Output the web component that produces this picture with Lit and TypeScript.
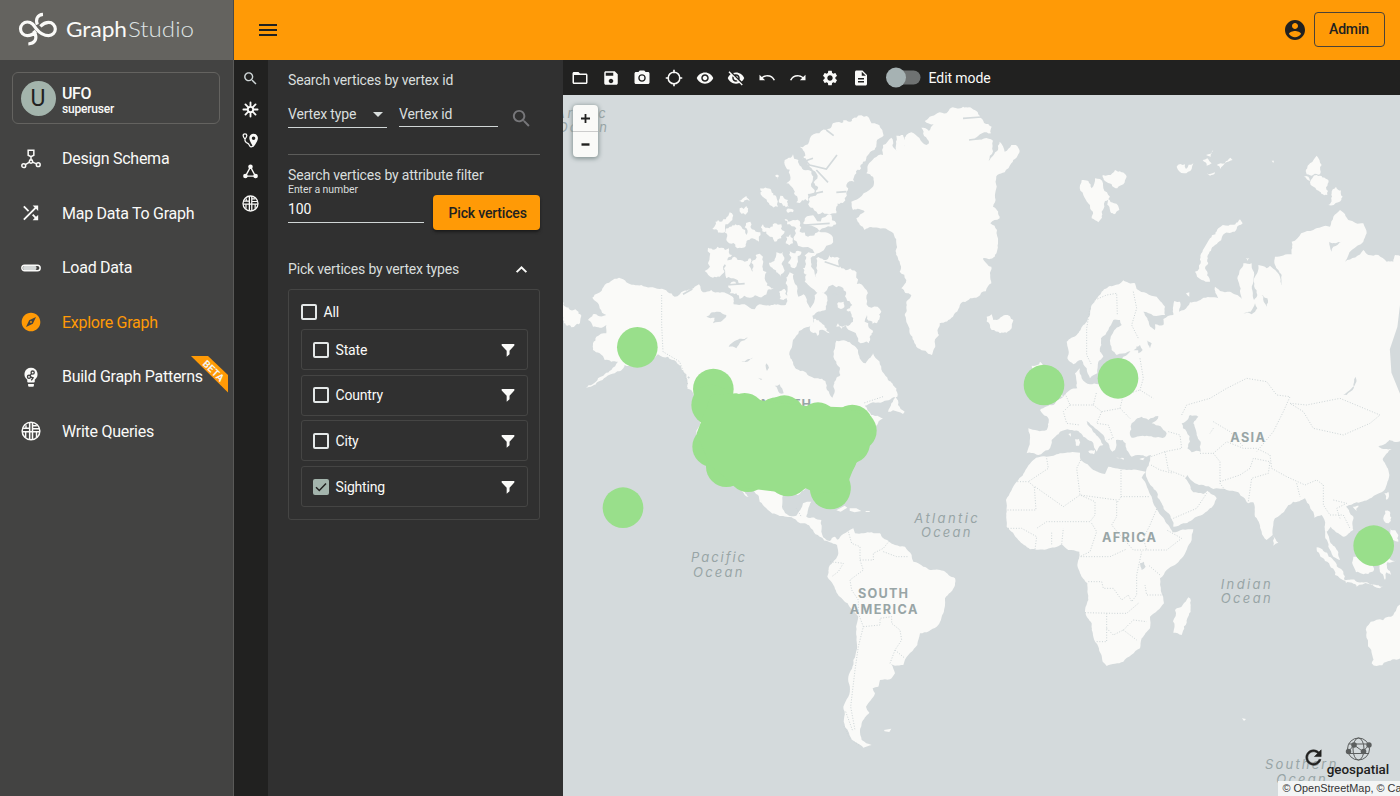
import { LitElement, html, css, svg } from "lit";
import { customElement, state } from "lit/decorators.js";

/* ---------- icons (24-unit grid) ---------- */
const icons: Record<string, unknown> = {
  menu: svg`<path d="M3 18h18v-2H3v2zm0-5h18v-2H3v2zm0-7v2h18V6H3z"/>`,
  account: svg`<path d="M12 2C6.480 2 2 6.480 2 12s4.480 10 10 10 10-4.480 10-10S17.520 2 12 2zm0 3c1.660 0 3 1.340 3 3s-1.340 3-3 3-3-1.340-3-3 1.340-3 3-3zm0 14.200c-2.500 0-4.710-1.280-6-3.220.03-1.990 4-3.080 6-3.080 1.990 0 5.970 1.090 6 3.080-1.290 1.940-3.500 3.220-6 3.220z"/>`,
  search: svg`<path d="M15.500 14h-.79l-.28-.27C15.410 12.590 16 11.110 16 9.500 16 5.910 13.090 3 9.500 3S3 5.910 3 9.500 5.910 16 9.500 16c1.610 0 3.090-.59 4.230-1.570l.27.28v.79l5 4.990L20.490 19l-4.990-5zm-6 0C7.010 14 5 11.990 5 9.500S7.010 5 9.500 5 14 7.010 14 9.500 11.990 14 9.500 14z"/>`,
  folder: svg`<path d="M20 6h-8l-2-2H4c-1.100 0-1.990.9-1.990 2L2 18c0 1.100.9 2 2 2h16c1.100 0 2-.9 2-2V8c0-1.100-.9-2-2-2zm0 12H4V8h16v10z"/>`,
  save: svg`<path d="M17 3H5c-1.110 0-2 .9-2 2v14c0 1.100.89 2 2 2h14c1.100 0 2-.9 2-2V7l-4-4zm-5 16c-1.660 0-3-1.340-3-3s1.340-3 3-3 3 1.340 3 3-1.340 3-3 3zm3-10H5V5h10v4z"/>`,
  camera: svg`<circle cx="12" cy="12" r="3.200"/><path d="M9 2L7.170 4H4c-1.100 0-2 .9-2 2v12c0 1.100.9 2 2 2h16c1.100 0 2-.9 2-2V6c0-1.100-.9-2-2-2h-3.170L15 2H9zm3 15c-2.760 0-5-2.240-5-5s2.240-5 5-5 5 2.240 5 5-2.240 5-5 5z"/>`,
  target: svg`<circle cx="12" cy="12" r="7.800" fill="none" stroke="currentColor" stroke-width="2"/><path d="M10.900 1h2.200v4.500h-2.200zM10.900 18.500h2.200V23h-2.200zM1 10.900h4.500v2.200H1zM18.500 10.900H23v2.200h-4.500z"/>`,
  eye: svg`<path d="M12 4.500C7 4.500 2.730 7.610 1 12c1.730 4.390 6 7.500 11 7.500s9.270-3.110 11-7.500c-1.730-4.390-6-7.500-11-7.500zM12 17c-2.760 0-5-2.240-5-5s2.240-5 5-5 5 2.240 5 5-2.240 5-5 5zm0-8c-1.660 0-3 1.340-3 3s1.340 3 3 3 3-1.340 3-3-1.340-3-3-3z"/>`,
  eyeOff: svg`<path d="M12 7c2.760 0 5 2.240 5 5 0 .65-.13 1.260-.36 1.830l2.920 2.920c1.510-1.260 2.700-2.890 3.430-4.750-1.730-4.390-6-7.500-11-7.500-1.400 0-2.740.25-3.980.7l2.160 2.160C10.740 7.130 11.350 7 12 7zM2 4.270l2.280 2.280.46.46C3.080 8.300 1.780 10.020 1 12c1.730 4.390 6 7.500 11 7.500 1.550 0 3.030-.3 4.380-.84l.42.42L19.730 22 21 20.730 3.270 3 2 4.270zM7.530 9.800l1.550 1.550c-.05.21-.08.43-.08.65 0 1.660 1.340 3 3 3 .22 0 .44-.03.65-.08l1.550 1.550c-.67.33-1.410.53-2.200.53-2.760 0-5-2.240-5-5 0-.79.2-1.530.53-2.200zm4.310-.78l3.150 3.150.02-.16c0-1.660-1.340-3-3-3l-.17.010z"/>`,
  undo: svg`<path d="M2 7.500v7.500h7.500l-3-3c1.700-1.300 3.700-2 6-2 3.700 0 6.900 2 8.300 5.300l1.900-.8C21 10.600 17.100 8 12.500 8c-2.800 0-5.400 1-7.400 2.600z"/>`,
  redo: svg`<path d="M22 7.500v7.500h-7.500l3-3c-1.700-1.300-3.700-2-6-2-3.700 0-6.900 2-8.300 5.300l-1.900-.8C3 10.600 6.900 8 11.500 8c2.800 0 5.400 1 7.400 2.600z"/>`,
  settings: svg`<path d="M19.140 12.940c.04-.3.06-.61.06-.94 0-.32-.02-.64-.07-.94l2.030-1.580c.18-.14.23-.41.12-.61l-1.920-3.320c-.12-.22-.37-.29-.59-.22l-2.390.96c-.5-.38-1.030-.7-1.620-.94l-.36-2.540c-.04-.24-.24-.41-.48-.41h-3.840c-.24 0-.43.17-.47.41l-.36 2.540c-.59.24-1.130.57-1.620.94l-2.390-.96c-.22-.08-.47 0-.59.22L2.740 8.870c-.12.21-.08.47.12.61l2.030 1.580c-.05.3-.09.63-.09.94s.02.64.07.94l-2.030 1.580c-.18.14-.23.41-.12.61l1.920 3.320c.12.22.37.29.59.22l2.390-.96c.5.38 1.030.7 1.620.94l.36 2.540c.05.24.24.41.48.41h3.840c.24 0 .44-.17.47-.41l.36-2.540c.59-.24 1.130-.56 1.620-.94l2.390.96c.22.08.47 0 .59-.22l1.920-3.320c.12-.22.07-.47-.12-.61l-2.010-1.580zM12 15.600c-1.980 0-3.600-1.620-3.600-3.600s1.620-3.600 3.600-3.600 3.600 1.620 3.600 3.600-1.620 3.600-3.600 3.600z"/>`,
  doc: svg`<path d="M14 2H6c-1.100 0-1.990.9-1.990 2L4 20c0 1.100.89 2 1.990 2H18c1.100 0 2-.9 2-2V8l-6-6zm2 16H8v-2h8v2zm0-4H8v-2h8v2zm-3-5V3.500L18.500 9H13z"/>`,
  schema: svg`<g fill="none" stroke="currentColor" stroke-width="1.800"><path d="M8.600 1.500h6.800v6L12 9.300 8.600 7.500zM12 9.500V14M10.200 15.800l-5 3M13.800 15.800l5 2"/><circle cx="12" cy="15" r="2"/><circle cx="3.300" cy="20" r="2.300"/><circle cx="20.700" cy="18.800" r="2.300"/></g>`,
  shuffle: svg`<path d="M9.800 9L4.200 3.200 2.600 4.800l5.700 5.700zM14 3l2.400 2.400L2.600 19.200l1.600 1.600L18 7l2.600 2.600V3zM14.800 13.200l-1.600 1.600 3.200 3.200L14 20.800h6.600v-6.400L18 16.600z"/>`,
  load: svg`<rect x="1" y="8.600" width="22" height="6.800" rx="3.400" fill="none" stroke="currentColor" stroke-width="1.800"/><rect x="2.500" y="9.600" width="16" height="4.800" rx="1.500" fill="#d5d8d8"/>`,
  compass: svg`<path d="M12 10.900c-.61 0-1.100.49-1.100 1.100s.49 1.100 1.100 1.100c.61 0 1.100-.49 1.100-1.100s-.49-1.100-1.100-1.100zM12 .8C5.800.8.8 5.800.8 12S5.800 23.200 12 23.200 23.200 18.200 23.200 12 18.200.8 12 .8zm2.190 13.390L6 18l3.810-8.190L18 6l-3.810 8.190z"/>`,
  bulb: svg`<path d="M8.500 20.500h7v1.600a1.500 1.500 0 0 1-1.500 1.500h-4a1.500 1.500 0 0 1-1.500-1.500zM12 1a7.800 7.800 0 0 0-4.500 14.200v2.400c0 .6.500 1 1 1h7c.5 0 1-.4 1-1v-2.400A7.800 7.800 0 0 0 12 1z"/><g fill="none" stroke="#424242" stroke-width="1.600"><circle cx="14" cy="6.700" r="1.900"/><circle cx="9.600" cy="11.800" r="1.900"/><path d="M12.600 8L10.800 10.300M11.500 12l3 1-2.200 3"/></g>`,
  grid: svg`<g fill="none" stroke="currentColor" stroke-width="1.800"><circle cx="12" cy="12" r="10.600"/><path d="M10.400 2v20M13.800 2v20M1.500 12.800h21"/><path d="M2.500 8.600h8M6 8.600V5M14 5.600h5M14 9.200h8M5.600 13v6.400M18.600 13v6.400" stroke-width="1.700"/></g>`,
  burst: svg`<g stroke="currentColor" stroke-width="2.600" fill="none" stroke-linecap="round"><circle cx="12" cy="12" r="3.800"/><path d="M12 2v5M12 17v5M2 12h5M17 12h5M4.900 4.900l3.700 3.700M15.400 15.400l3.700 3.700M19.100 4.900l-3.700 3.700M8.600 15.400l-3.700 3.700"/></g>`,
  route: svg`<path d="M16.300 2.500a6 6 0 0 0-6 6c0 4.700 6 12.500 6 12.500s6.200-7.800 6.200-12.500a6.100 6.100 0 0 0-6.200-6zm0 3.800a2.500 2.500 0 1 1 0 5 2.500 2.500 0 0 1 0-5z"/><g fill="none" stroke="currentColor" stroke-width="1.800"><path d="M4.200 2.500a2.600 2.600 0 0 1 2.600 2.600C6.800 7.200 4.200 10 4.200 10S1.600 7.200 1.600 5.100a2.600 2.600 0 0 1 2.600-2.600zM4.200 10c-.6 4 1.500 5 4 6s2 4.700 4.500 5c2 .2 2.800-.8 3.600-2"/></g>`,
  triangle: svg`<path d="M12 5.500L5 18.500h14z" fill="none" stroke="currentColor" stroke-width="1.900"/><circle cx="12" cy="5.300" r="3.200"/><circle cx="4.800" cy="18.500" r="3.200"/><circle cx="19.200" cy="18.500" r="3.200"/>`,
  filter: svg`<path d="M2.500 3h19v2.200L14.300 13v5.500L10 22v-9L2.500 5.200z"/>`,
  up: svg`<path d="M12 7.500l-7 7 1.700 1.700L12 10.900l5.300 5.300 1.700-1.700z"/>`,
  refresh: svg`<path d="M17.650 6.350C16.200 4.900 14.210 4 12 4c-4.420 0-7.990 3.580-7.990 8s3.570 8 7.990 8c3.730 0 6.840-2.550 7.730-6h-2.080c-.82 2.330-3.040 4-5.650 4-3.310 0-6-2.690-6-6s2.690-6 6-6c1.660 0 3.140.69 4.220 1.780L13 11h7V4l-2.350 2.350z" stroke="currentColor" stroke-width=".6"/>`,
};

const icon = (name: string, size = 18) =>
  html`<svg class="ic" width=${size} height=${size} viewBox="0 0 24 24" fill="currentColor">${icons[name]}</svg>`;

/* ---------- coastline helper: fractal subdivision of a coarse outline ---------- */
let seed = 7;
const rnd = () => {
  seed = (seed * 16807) % 2147483647;
  return seed / 2147483647 - 0.5;
};
function coast(points: string, rough = 0.2, dx = 0, dy = 0): string {
  let pts = points.trim().split(/\s+/).map((p) => {
    const [x, y] = p.split(",").map(Number);
    return [x + dx, y + dy];
  });
  for (let pass = 0; pass < 3; pass++) {
    const next: number[][] = [];
    pts.forEach((a, i) => {
      const b = pts[(i + 1) % pts.length];
      next.push(a);
      const ex = b[0] - a[0], ey = b[1] - a[1];
      if (Math.hypot(ex, ey) < 9) return;
      const k = rnd() * 2 * rough;
      next.push([(a[0] + b[0]) / 2 - ey * k, (a[1] + b[1]) / 2 + ex * k]);
    });
    pts = next;
  }
  return "M" + pts.map((p) => p.map((v) => v.toFixed(1)).join(",")).join("L") + "Z";
}

/* Map units are a third of a pixel. E = x offset of the eastern sheet */
const E = 1251;
const northAmerica = [
  "88,608 105,595 122,575 168,548 190,562 235,570 290,582 335,605 362,588 395,575 408,568 420,592 445,585 480,592 512,610 512,628 545,628 575,643 590,628 630,630 668,630 672,605 668,565 680,532 692,538 702,572 706,605 722,598 742,640 755,600 765,585 790,600 788,645 748,662 752,685 722,700 708,708 690,735 682,765 682,790 700,822 725,830 765,850 787,858 792,885 808,908 815,890 812,870 832,840 820,800 820,737 850,738 885,765 890,790 908,805 930,775 958,830 975,855 1000,880 1003,905 960,920 930,922 905,932 925,960 960,970 945,985 930,1000 800,1160 728,1180 705,1200 660,1200 657,1235 672,1258 700,1262 712,1245 720,1225 745,1220 735,1245 730,1265 775,1275 775,1310 785,1330 800,1338 815,1325 830,1338 822,1350 800,1342 770,1325 750,1305 720,1285 690,1270 650,1263 610,1240 590,1220 585,1200 572,1187 500,1150 400,1050 388,890 372,880 362,830 340,800 315,785 285,778 230,800 185,810 155,835 105,860 68,880 105,850 145,825 165,800 125,795 110,775 90,765 90,745 100,725 130,715 130,690 90,695 75,675 90,658 130,660 110,640 100,620",
  "515,1172 530,1178 557,1205 545,1200",
  "975,950 985,925 998,905 1005,930 1025,950 1020,957 1005,950",
];
const arctic = [
  "790,105 820,82 850,76 880,68 935,85 960,115 940,150 915,180 900,200 880,235 850,270 845,310 820,335 820,355 765,358 740,335 742,305 762,298 752,262 760,235 740,215 718,190 710,155 760,115",
  "690,178 706,195 715,215 735,225 748,260 755,285 735,318 700,322 690,280 670,265 668,215",
  "720,385 740,362 805,360 820,385 805,395 735,390",
  "665,372 690,375 712,385 710,410 735,425 780,412 805,420 805,448 705,452 700,400 672,388",
  "592,280 612,280 640,305 645,335 620,330 605,310", "652,302 675,315 678,335 660,332",
  "528,318 550,303 560,318", "530,340 550,333 555,350 535,356", "636,242 648,242 646,258",
  "670,345 692,345 690,352 672,352", "448,402 465,375 500,352 508,375 485,412",
  "490,435 500,395 535,395 550,420 562,380 575,405 592,412 588,440 555,435 530,458",
  "600,388 620,400 635,385 655,388 655,430 635,440 615,420", "668,425 682,418 690,445 668,445",
  "435,458 475,458 507,480 480,515 470,545 450,548 425,528",
  "483,520 500,495 520,488 545,500 562,490 570,530 578,480 600,485 598,515 605,550 632,580 605,600 560,608 530,612 500,595 495,570 540,568 490,550",
  "618,503 640,472 660,470 662,520 652,545 628,518", "680,468 715,470 705,500 687,518 675,505",
  "725,482 760,478 748,520 760,548 760,490 800,480 830,490 835,520 880,540 905,580 910,610 955,650 940,685 912,660 905,680 930,712 918,745 870,710 820,695 825,685 870,680 850,645 868,630 850,610 820,577 745,578 725,560 720,520",
  "752,672 770,680 800,715 770,705 762,722 746,712", "826,622 842,620 840,640 828,640", "648,590 665,582 672,610 650,612",
  "0,620 22,645 55,662 38,690 25,697 0,675",
];
const greenland =
  "960,150 985,128 1000,170 1000,122 1020,120 1024,155 1030,120 1045,112 1090,150 1098,145 1075,98 1098,108 1112,88 1085,78 1100,65 1150,55 1165,38 1200,35 1235,45 1250,62 1286,95 1284,115 1235,130 1290,137 1277,198 1305,165 1310,140 1325,170 1345,150 1358,150 1370,168 1345,205 1325,232 1303,240 1300,280 1290,335 1310,370 1282,385 1302,405 1305,440 1295,485 1260,490 1285,515 1285,565 1245,605 1200,620 1170,665 1130,685 1128,720 1115,740 1107,780 1065,760 1040,715 1025,660 1030,620 1045,600 1015,580 1030,555 1010,530 1005,490 1000,445 975,405 945,398 905,405 880,370 905,350 870,345 865,320 925,280 930,245 910,235 915,210 960,180";
const eurasia =
  "260,740 290,720 310,690 330,660 345,615 365,590 400,572 430,556 465,565 470,582 500,595 530,605 555,635 555,660 520,662 490,650 502,670 508,690 525,705 525,688 550,690 550,672 580,660 583,618 600,620 597,650 612,645 630,622 665,612 715,610 705,575 720,588 750,590 785,612 772,550 790,505 815,505 820,560 822,615 832,600 825,545 835,510 860,520 870,512 890,530 905,570 905,540 885,510 885,485 935,478 935,440 1000,405 1050,395 1060,365 1080,345 1105,375 1150,385 1160,415 1150,440 1095,500 1150,465 1165,480 1195,480 1220,500 1240,500 1245,480 1265,485 1265,1040 1228,1035 1195,1055 1215,1062 1235,1062 1208,1092 1225,1125 1225,1155 1205,1192 1175,1208 1130,1222 1098,1235 1120,1265 1120,1305 1090,1325 1075,1315 1052,1295 1040,1310 1050,1340 1075,1372 1080,1395 1060,1385 1045,1355 1036,1330 1035,1290 1025,1260 1003,1268 990,1235 975,1210 940,1220 915,1245 885,1270 880,1290 878,1320 860,1335 845,1310 825,1265 820,1222 805,1225 775,1192 740,1185 700,1182 670,1170 645,1165 622,1140 615,1150 640,1192 670,1197 682,1187 710,1210 690,1240 650,1265 610,1285 580,1295 570,1260 545,1225 530,1190 503,1155 497,1132 506,1112 513,1080 500,1085 455,1085 440,1065 437,1045 428,1035 408,1035 405,1065 397,1070 385,1045 370,1020 345,1000 320,978 322,988 345,1015 362,1035 370,1050 360,1052 350,1070 340,1045 310,1025 295,1008 270,1005 240,1010 215,1035 205,1065 175,1080 140,1075 145,1000 200,1005 205,970 180,945 220,930 250,905 270,885 292,880 290,860 285,835 300,820 305,850 330,868 355,868 400,850 430,785 455,765 480,765 475,755 410,780 395,765 395,720 425,690 420,675 400,675 385,705 363,730 360,770 370,785 355,800 352,835 330,850 320,820 305,795 280,808 262,790";
const africa =
  "168,1088 200,1085 240,1075 300,1073 302,1095 340,1125 375,1137 385,1115 440,1125 497,1130 485,1148 495,1160 515,1205 530,1242 550,1268 565,1290 578,1312 640,1303 635,1335 605,1390 560,1425 540,1450 552,1525 510,1565 510,1600 485,1630 480,1660 430,1700 380,1713 368,1700 355,1655 340,1625 335,1585 315,1550 325,1515 322,1465 300,1435 292,1410 298,1370 265,1365 245,1348 200,1363 150,1363 115,1335 80,1295 80,1250 78,1215 110,1160 140,1120";
const eastIslands = [
  "20,665 35,658 40,675 75,660 100,675 95,700 60,715 35,705 30,690",
  "305,255 325,258 335,280 345,250 360,252 370,280 390,305 375,318 365,350 355,382 335,370 330,330 318,315",
  "368,240 385,240 405,225 440,245 430,268 412,280 395,268 375,258", "385,312 402,325 418,345 402,358 390,345",
  "590,215 615,208 618,222 640,205 635,222 612,235", "668,195 682,190 695,205 680,212", "678,180 700,165 692,185", "710,210 735,205 722,222", "735,205 752,188 758,195", "680,235 705,232 690,242",
  "645,530 662,505 672,460 690,430 715,400 745,392 780,373 788,385 770,402 735,415 705,450 682,485 675,520 690,560 665,555",
  "990,205 1010,182 1025,210 1020,238 980,238", "990,262 1010,240 1045,255 1042,300 1010,285", "1045,330 1055,295 1068,275 1088,305 1075,322",
  "972,245 985,245 990,258", "797,490 808,490 802,498", "618,595 628,592 628,605",
  "155,812 180,800 190,812 250,905 215,915 190,920", "875,197 882,197 880,204",
  "625,1507 632,1530 622,1570 605,1620 580,1613 585,1545 608,1530",
  "1265,1525 1225,1565 1160,1595 1170,1660 1175,1705 1190,1713 1220,1700 1265,1685",
  "1010,1357 1030,1368 1065,1400 1090,1430 1095,1458 1065,1440 1035,1398", "1095,1455 1130,1460 1170,1468 1210,1475 1200,1480 1130,1475 1098,1464",
  "1120,1385 1180,1402 1182,1425 1165,1437 1128,1432", "1205,1392 1250,1397 1222,1402 1235,1445 1220,1432 1215,1455 1203,1435",
  "1215,1247 1230,1250 1226,1285 1212,1278", "1230,1300 1255,1320 1255,1340 1240,1335", "1118,1235 1136,1232 1130,1248", "1213,1195 1225,1190 1220,1215", "880,1322 895,1343 880,1352",
  "265,1017 272,1015 272,1025", "286,1032 297,1032 297,1052 288,1052", "408,1088 432,1090 430,1095", "478,1092 495,1088 490,1096", "325,1068 345,1065 342,1078",
];
const southAmerica =
  "172,60 190,42 220,25 225,40 250,40 300,40 310,55 345,75 375,80 395,105 400,125 430,140 450,150 490,152 525,175 525,195 495,235 490,280 470,320 420,340 412,375 385,405 370,435 345,437 333,432 345,460 330,478 300,480 295,500 278,505 285,520 258,560 268,578 245,610 240,630 245,660 275,675 250,683 215,660 195,620 190,560 205,530 205,470 220,420 230,350 235,290 215,270 185,235 160,195 142,170 150,135 175,100";
const seas = [
  [E, 0, "450,1020 455,985 472,970 485,965 505,975 535,963 530,975 515,985 560,1015 555,1026 500,1022 455,1028"],
  [E, 0, "605,985 630,960 655,965 640,985 650,1020 662,1040 662,1070 635,1072 622,1060 630,1040 620,1010"],
  [E, 0, "468,755 480,750 488,765 475,775"], [E, 0, "480,1405 492,1400 497,1415 485,1425"],
  [E, 0, "825,625 832,640 815,658 790,655 812,650"], [E, 0, "1090,900 1115,880 1128,845 1122,878 1100,900"], [E, 0, "1048,440 1085,440 1060,455 1055,470"],
  [E, 0, "845,600 862,610 860,635 850,605"], [E, 0, "500,735 515,745 510,760"],
  [0, 0, "430,665 465,650 490,660 480,675 450,685 455,668"], [0, 0, "497,755 515,738 555,728 520,760"], [0, 0, "535,800 570,788 560,795"],
  [0, 0, "610,805 618,818 612,828"], [0, 0, "635,872 650,868 662,895 650,895"], [0, 0, "585,848 598,852 594,855"],
] as [number, number, string][];

const alaskaBorder = "M296,600V690L300,770L350,800L375,870";
const eastBorders = [
  "M145,1160L163,1175L168,1245H82M112,1160H145M200,1090L205,1120L145,1160M205,1120M165,1175L250,1235L300,1200L345,1220L345,1260L330,1280H200L170,1300M302,1095L290,1120L300,1200L410,1215V1265L395,1290L420,1320M423,1125V1205H510M423,1205L410,1225M530,1242L510,1290L490,1330L500,1365H560L605,1330L560,1305M420,1320L460,1365H500M335,1285L350,1310L330,1370L300,1385H390L440,1362M245,1348L250,1300M215,1348V1310M165,1363L170,1325L125,1300H82M325,1460H365L370,1480H400L425,1515L445,1500L455,1520L470,1500V1440L485,1370M552,1500H500L495,1470M315,1553L400,1555H440L475,1525M380,1555V1640L345,1640M380,1600L400,1620L430,1605L460,1575L500,1580M430,1605L470,1635M540,1440L505,1410",
  "M330,640L320,700V780L335,810M345,615L380,600L410,595L412,660M460,590L470,640L455,690L475,730M480,790L490,850L480,885L520,910",
  "M255,895L270,930L250,950L260,985L300,990M270,930L340,930L350,890M340,930L365,950L420,940L450,970M365,950L350,985L385,990L400,1030L380,1035M420,940L430,900L480,885",
  "M565,1010L600,1020L605,1060L555,1070L513,1085M555,1070L565,1125L615,1145M513,1110L540,1125L580,1135M580,1270L650,1240L680,1195M660,1075L700,1075L720,1100L720,1165L735,1185M700,1075L740,1040L790,1060L830,1060L870,1080L875,1120L920,1145L975,1170L1010,1155L1030,1170M720,1160L780,1140L810,1120L820,1090L870,1100L865,1135L815,1150L805,1220M950,1165L960,1205",
  "M605,960L620,930L690,910L740,880L800,850L860,860L890,900L930,905L910,950L880,1010L830,1070M700,980L750,1010L790,1055M700,1000L690,1015M930,925L980,930L1080,910L1200,960L1170,985L1090,1020L1000,1000L970,950L930,925M1030,1170L1030,1230L1050,1260L1090,1260L1110,1300M1060,1215L1100,1225L1070,1240L1080,1270",
];
const southBorders =
  "M205,35L215,70L240,80L240,120L250,150L210,180L215,210L235,240V280M150,125L190,130L175,155L155,170M240,120H280V100L310,85L330,60M310,95L350,110L385,110M235,280L250,320L235,380L225,450L212,560L225,630M250,320L300,315L300,295L335,290V310L360,330L365,360L345,390L330,430M345,390L375,415";

const circles: number[][] = [
  [223, 757], [180, 1238], [1443, 870], [1665, 850], [2432, 1352],
  [451, 882], [446, 930], [449, 1055], [490, 1115], [545, 955], [555, 1130], [640, 968], [664, 962], [675, 1143], [765, 983], [802, 1176], [802, 1182], [868, 990], [880, 1007], [860, 1045], [790, 1100], [610, 1120], [820, 1090],
];

@customElement("app-root")
export class AppRoot extends LitElement {
  static styles = css`
    :host { display: flex; flex-direction: column; width: 1400px; height: 796px; overflow: hidden; font-family: Roboto, "Liberation Sans", sans-serif; color: #fafaf8; }
    * { box-sizing: border-box; }
    .ic { display: block; flex: none; }
    .head { display: flex; height: 60px; flex: none; }
    .brand { width: 234px; background: #64635f; border-right: 1px solid #4a4a48; }
    .brand svg { display: block; }
    .bar { flex: 1; background: #ff9a06; color: #212120; display: flex; align-items: center; padding: 0 15.500px 0 22px; }
    .admin { margin-left: 7px; width: 71px; height: 35px; border: 1px solid #4b4338; border-radius: 4px; font: 500 14px Roboto, sans-serif; letter-spacing: -0.150px; color: #212120; display: grid; place-items: center; margin-top: -2px; }
    .grow { flex: 1; }
    .body { display: flex; flex: 1; min-height: 0; }
    .side { width: 234px; background: #434342; border-right: 1px solid #5a5a58; padding-top: 12px; }
    .user { margin: 0 13px 0 12px; height: 52px; border: 1px solid #646360; border-radius: 6px; display: flex; align-items: center; padding-left: 7.500px; }
    .avatar { width: 35px; height: 35px; border-radius: 50%; background: #a3b4ac; color: #212120; display: grid; place-items: center; font-size: 23px; }
    .who { margin-left: 6.500px; font-weight: 500; font-size: 16px; letter-spacing: -0.400px; line-height: 17px; padding-top: 5px; }
    .who small { display: block; font-size: 12px; letter-spacing: -0.200px; line-height: 14px; }
    .menu { padding-top: 7.500px; }
    .item { height: 54.500px; display: flex; align-items: center; padding-left: 21px; font-size: 16px; letter-spacing: -0.270px; gap: 21px; position: relative; }
    .item.on { color: #ff9a06; }
    .beta { position: absolute; left: 191px; top: 6px; }
    .rail { width: 34px; background: #212120; display: flex; flex-direction: column; align-items: center; padding: 9.500px 1px 0 0; gap: 14.300px; }
    .rail .first { color: #cfd6d7; }
    .panel { width: 295px; background: #303030; padding: 0 23px 0 20px; font-size: 14px; letter-spacing: -0.170px; color: #d9dedd; }
    .ttl { line-height: 18px; white-space: nowrap; }
    .t1 { padding-top: 11px; }
    .ids { display: flex; margin-top: 15px; height: 25px; }
    .fld { width: 99px; border-bottom: 1px solid #d0d6d6; line-height: 20px; display: flex; height: 24px; }
    .fld + .fld { margin-left: 12px; height: 23px; width: 99px; }
    .caret { margin: 8px 4px 0 auto; width: 0; height: 0; border: 5px solid transparent; border-top-color: #d9dedd; border-bottom: 0; }
    .find { color: #77777a; margin: 3px 0 0 11.500px; }
    .rule { border-top: 1px solid #5c5c5a; margin-top: 25px; padding-top: 11px; }
    .pick { display: flex; }
    .num { width: 136px; margin-right: 9.500px; height: 39px; border-bottom: 1px solid #d0d6d6; font-size: 10.500px; letter-spacing: -0.080px; line-height: 12px; }
    .num b { display: block; font-weight: 400; font-size: 14px; color: #fafaf8; line-height: 26px; }
    .btn { margin-top: 11px; width: 107px; height: 35px; border-radius: 4px; background: #ff9a06; color: #212120; font: 500 14px Roboto, sans-serif; display: grid; place-items: center; padding-left: 2px; box-shadow: 0 2px 3px #1b1b1b; }
    .types { display: flex; margin-top: 29px; align-items: center; height: 20px; }
    .types .chev { display: flex; margin-right: 9.500px; color: #fafaf8; }
    .box { border: 1px solid #454544; margin-top: 10px; height: 231px; border-radius: 3px; padding: 11px 11px 0 11.500px; color: #fafaf8; }
    .all { display: flex; height: 22px; align-items: center; gap: 7px; }
    .row { display: flex; height: 41px; margin-bottom: 4.700px; border: 1px solid #454544; border-radius: 3px; align-items: center; gap: 7px; padding: 0 11px; }
    .row .ic { margin-left: auto; }
    .all + .row { margin-top: 6px; }
    .chk { width: 16px; height: 16px; border: 2px solid #e4e8e8; border-radius: 2px; flex: none; }
    .chk.on { background: #a3b4ac; border: 0; }
    .chk svg { display: block; }
    .main { flex: 1; min-width: 0; display: flex; flex-direction: column; }
    .tools { height: 35px; background: #212120; display: flex; align-items: center; gap: 13.200px; padding-left: 8px; }
    .tog { margin-left: 3.500px; width: 35px; height: 21px; display: flex; align-items: center; }
    .edit { margin-left: -6px; font-size: 14px; letter-spacing: -0.080px; }
    .map { flex: 1; position: relative; background: #d4dadc; overflow: hidden; }
    .world { display: block; }
    .zoom { position: absolute; left: 10px; top: 10px; width: 25px; border-radius: 4px; background: #fafaf8; box-shadow: 0 1px 4px 1px #8b9898; color: #212120; }
    .zoom div { height: 26px; display: grid; place-items: center; }
    .zoom div + div { border-top: 1px solid #ccc; }
    .re { position: absolute; left: 739px; top: 651px; color: #212120; }
    .geo { position: absolute; left: 762.500px; top: 641px; width: 65px; color: #212120; font: 500 13.400px/15px Roboto, sans-serif; text-align: center; }
    .geo svg { display: block; margin: 0 auto -1px; }
    .credit { position: absolute; left: 715px; top: 686px; width: 130px; height: 15px; background: #f3f5f5; color: #333; font: 10.900px/15px "Liberation Sans", sans-serif; padding-left: 4.500px; white-space: nowrap; }
    .lab { font-family: Inter, sans-serif; fill: #98a5a6; }
    .cont { font-weight: 700; font-size: 38px; }
    .ocean { font-style: italic; font-size: 39px; }
  `;

  @state() private menu = [
    ["schema", "Design Schema"], ["shuffle", "Map Data To Graph"], ["load", "Load Data"],
    ["compass", "Explore Graph"], ["bulb", "Build Graph Patterns"], ["grid", "Write Queries"],
  ];
  @state() private types = ["State", "Country", "City", "Sighting"];

  private label(x: number, y: number, w: number, t: string, c = "ocean") {
    return svg`<text class="lab ${c}" x=${x} y=${y} textLength=${w} lengthAdjust="spacing">${t}</text>`;
  }

  private world() {
    seed = 7;
    const land = "#fafaf8", sea = "#d4dadc";
    return html`<svg class="world" width="837" height="701" viewBox="0 0 2511 2103">
      <g fill=${land}>
        ${northAmerica.map((p) => svg`<path d=${coast(p, 0.15)} />`)}
        ${arctic.map((p) => svg`<path d=${coast(p, 0.3)} />`)}
        <path d=${coast(greenland, 0.16)} />
        <path d=${coast(eurasia, 0.12, E)} />
        <path d=${coast(africa, 0.07, E)} />
        ${eastIslands.map((p) => svg`<path d=${coast(p, 0.2, E)} />`)}
        <path d=${coast(southAmerica, 0.09, 651, 1275)} />
        <path d="M820,1246l25,-14l8,6l-20,12zM860,1240h20l15,8l-20,4l-15,-5zM908,1248h12v3h-12zM963,1905l22,-4l-6,10l-14,-2zM1155,1938l14,10zM2037,1870l12,2l-6,6zM38,716l24,4z" />
      </g>
      <g fill=${sea}>
        ${seas.map(([x, y, p]) => svg`<path d=${coast(p, 0.15, x, y)} />`)}
      </g>
      <g fill="none" stroke=${sea} stroke-width="5">
        <path d="M712,180L740,210L790,222L822,180M790,105L812,122M760,225L795,262M720,200L750,190M735,300L780,290M725,390L800,385M810,600L845,590M490,570L545,566M785,500L830,515M360,598L388,582M820,292L850,290M1200,70L1255,66M1218,135L1256,130" />
        <path d="M295,790L350,835L372,880M325,800L365,835M345,820L380,850" stroke-dasharray="6 7" />
      </g>
      <g fill="none" stroke="#cdd5d7" stroke-width="3" stroke-dasharray="3 5">
        <path d=${alaskaBorder} />
        <g transform="translate(1251 0)">${eastBorders.map((d) => svg`<path d=${d} />`)}</g>
        <path transform="translate(651 1275)" d=${southBorders} />
        <path d="M843,1893L860,1930L890,1952M848,1850L870,1910M700,1240L715,1265M960,905L900,925" />
      </g>
      ${this.label(594, 943, 150, "NORTH", "cont")}
      ${this.label(1617, 1342, 162, "AFRICA", "cont")}
      ${this.label(2002, 1041, 104, "ASIA", "cont")}
      ${this.label(885, 1509, 150, "SOUTH", "cont")}
      ${this.label(860, 1558, 203, "AMERICA", "cont")}
      ${this.label(384, 1402, 162, "Pacific")}
      ${this.label(390, 1445, 148, "Ocean")}
      ${this.label(1054, 1283, 190, "Atlantic")}
      ${this.label(1074, 1327, 148, "Ocean")}
      ${this.label(1973, 1481, 150, "Indian")}
      ${this.label(1973, 1524, 150, "Ocean")}
      ${this.label(2106, 2023, 214, "Southern")}
      ${this.label(2140, 2067, 148, "Ocean")}
      ${this.label(-22, 68, 150, "Arctic")}
      ${this.label(-16, 112, 148, "Ocean")}
      <g fill="#99df8b">
        ${circles.map(([x, y]) => svg`<circle cx=${x} cy=${y} r="61" />`)}
        <path d="M445,900L520,895L600,917L730,933L800,935L840,937L900,960L935,1030L915,1055L890,1085L872,1120L860,1150L845,1190L760,1195L728,1180L710,1192L640,1190L520,1175L440,1110L401,1015Z" />
      </g>
    </svg>`;
  }

  render() {
    return html`
      <div class="head">
        <div class="brand">
          <svg width="233" height="60" viewBox="0 0 233 60">
            <g transform="scale(.3333)" fill="none" stroke="#fafaf8" stroke-width="9.500">
              <path d="M106,102C111,119 104,131 85,132M107,95C99,104 92,107 82,107A20.500 20.500 0 0 1 82,66C96,66 102,76 110,88C122,103 133,107 146,107A20 20 0 0 0 146,67C135,67 128,72 121,79" />
              <path d="M129,43C112,44 106,58 112,74M106,102C105,98 104,96 101,92" />
            </g>
            <text x="66" y="37" font-family="Lato" font-size="22" fill="#fafaf8" textLength="61" lengthAdjust="spacingAndGlyphs">Graph</text>
            <text x="128" y="37" font-family="Lato" font-weight="300" font-size="22" fill="#dfe4e4" textLength="66" lengthAdjust="spacingAndGlyphs">Studio</text>
          </svg>
        </div>
        <div class="bar">${icon("menu", 24)}<span class="grow"></span>${icon("account", 24)}<div class="admin">Admin</div></div>
      </div>
      <div class="body">
        <div class="side">
          <div class="user"><div class="avatar">U</div><div class="who">UFO<small>superuser</small></div></div>
          <div class="menu">
            ${this.menu.map(([ic, t]) => html`<div class="item ${ic === "compass" ? "on" : ""}">
              ${icon(ic, 20)}<span>${t}</span>
              ${ic === "bulb" ? html`<svg class="beta" width="38" height="37" viewBox="0 0 38 37"><path d="M0 0H17L37 19V36.500Z" fill="#ff9a06"/><text transform="translate(11 8.500) rotate(44)" font-family="Roboto" font-weight="700" font-size="10" fill="#f4f4f2" textLength="25">BETA</text></svg>` : ""}
            </div>`)}
          </div>
        </div>
        <div class="rail">
          <span class="first">${icon("search", 17)}</span>${["burst", "route", "triangle", "grid"].map((n) => icon(n, 17))}
        </div>
        <div class="panel">
          <div class="ttl t1">Search vertices by vertex id</div>
          <div class="ids"><div class="fld">Vertex type<i class="caret"></i></div><div class="fld">Vertex id</div><span class="find">${icon("search", 23)}</span></div>
          <div class="rule ttl">Search vertices by attribute filter</div>
          <div class="pick"><div class="num">Enter a number<b>100</b></div><div class="btn">Pick vertices</div></div>
          <div class="types"><span>Pick vertices by vertex types</span><span class="grow"></span><span class="chev">${icon("up", 19)}</span></div>
          <div class="box">
            <div class="all"><i class="chk"></i>All</div>
            ${this.types.map((t) => html`<div class="row">
              ${t === "Sighting" ? html`<i class="chk on"><svg width="16" height="16" viewBox="0 0 16 16"><path d="M3 8.300l3.300 3.200L13 4.500" fill="none" stroke="#212120" stroke-width="1.500"/></svg></i>` : html`<i class="chk"></i>`}
              <span>${t}</span>${icon("filter", 16)}</div>`)}
          </div>
        </div>
        <div class="main">
          <div class="tools">
            ${["folder", "save", "camera", "target", "eye", "eyeOff", "undo", "redo", "settings", "doc"].map((n) => icon(n, 18))}
            <span class="tog"><svg width="35" height="21" viewBox="0 0 35 21"><rect x="2" y="3.500" width="32.500" height="14" rx="7" fill="#6f7272"/><circle cx="10" cy="10.500" r="10" fill="#a6b2b3"/></svg></span>
            <span class="edit">Edit mode</span>
          </div>
          <div class="map">
            ${this.world()}
            <div class="zoom">
              <div><svg width="11" height="11" viewBox="0 0 11 11"><path d="M5.500 1v9M1 5.500h9" stroke="#212120" stroke-width="1.800"/></svg></div>
              <div><svg width="11" height="11" viewBox="0 0 11 11"><path d="M1.500 5.500h8" stroke="#212120" stroke-width="2.400"/></svg></div>
            </div>
            <div class="re">${icon("refresh", 23)}</div>
            <div class="geo">
              <svg width="27" height="27" viewBox="0 0 27 27"><g fill="none" stroke="#5c5f5f" stroke-width="1"><circle cx="13.500" cy="13" r="11"/><ellipse cx="13.500" cy="13" rx="5.500" ry="11"/><path d="M3.500 8h20M3 17.500h21M3.500 15.500L9 9L18 15.500L24 9"/></g><g fill="#5c5f5f"><circle cx="3.500" cy="15.500" r="2.700"/><circle cx="9" cy="9" r="2.800"/><circle cx="18.500" cy="15.500" r="2.800"/><circle cx="24" cy="9" r="2.700"/></g></svg>
              geospatial
            </div>
            <div class="credit">© OpenStreetMap, © CartoDB</div>
          </div>
        </div>
      </div>
    `;
  }
}
